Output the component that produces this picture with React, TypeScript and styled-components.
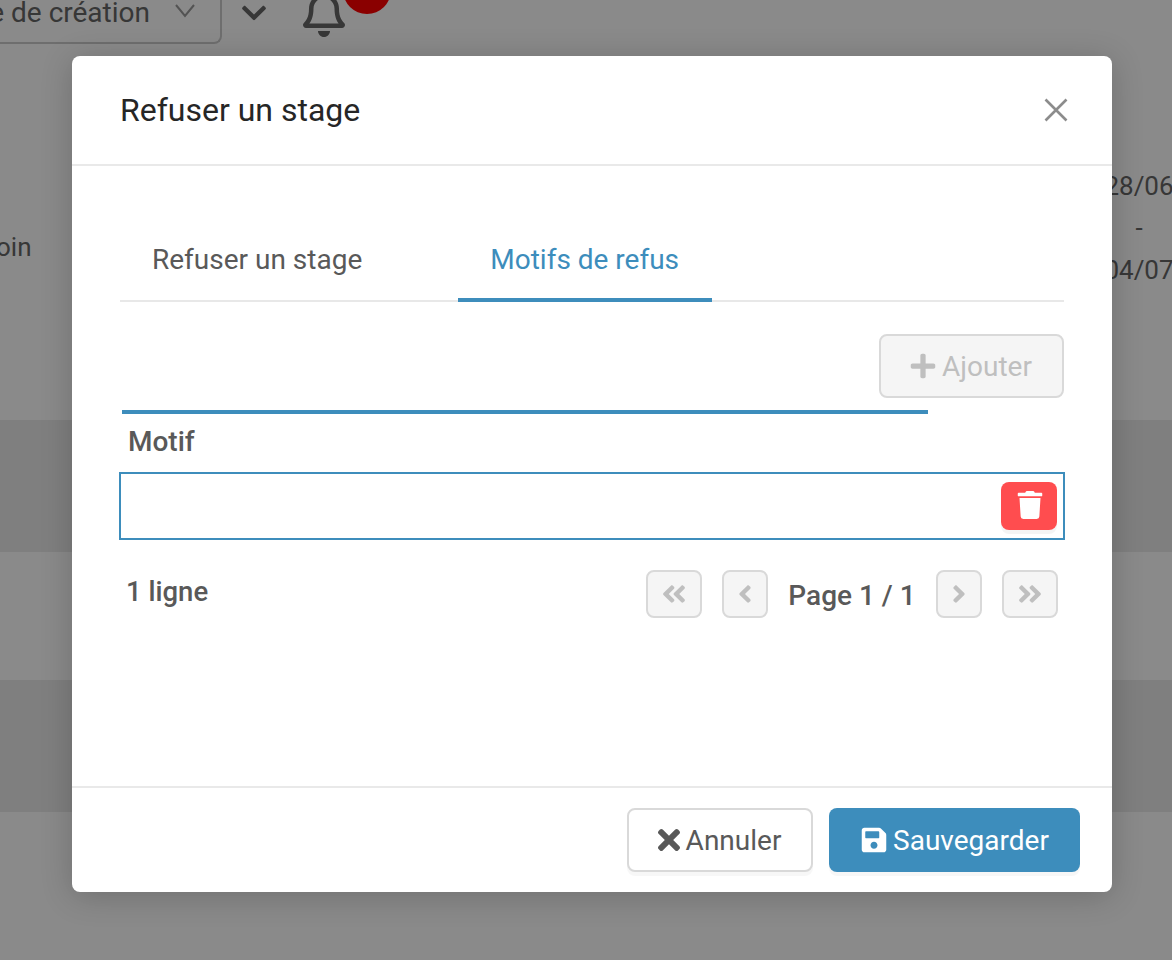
import React from "react";
import styled, { createGlobalStyle } from "styled-components";
import { FaPlus, FaTrash, FaAngleDoubleLeft, FaAngleDoubleRight, FaAngleLeft, FaAngleRight, FaTimes, FaSave, FaChevronDown, FaRegBell } from "react-icons/fa";

const Global = createGlobalStyle`
  html, body { margin: 0; padding: 0; background: #fff; }
  body { font-family: Roboto, "Liberation Sans", sans-serif; color: #555; }
  * { box-sizing: border-box; }
`;

const BLUE = "#3d8dbc";

const Page = styled.div`
  position: relative;
  width: 1172px;
  height: 960px;
  overflow: hidden;
`;
const TopBar = styled.div`
  height: 44px;
  display: flex;
  align-items: flex-start;
`;
const SelectBox = styled.div`
  width: 222px;
  height: 44px;
  padding-right: 34px;
  border: 2px solid #ccc;
  border-top: 0;
  border-left: 0;
  border-radius: 0 0 8px 0;
  display: flex;
  align-items: flex-start;
  justify-content: flex-end;
  font-size: 28px;
  line-height: 25px;
  color: #666;
  white-space: nowrap;
  overflow: hidden;
`;
const SelectChevron = styled.svg`
  width: 20px;
  height: 14px;
  margin: 4px -9px 0 25px;
  flex: none;
`;
const HeaderChevron = styled.div`
  margin: -1px 0 0 18px;
  height: 24px;
  display: flex;
  color: #666;
  font-size: 28px;
`;
const BellWrap = styled.div`
  position: relative;
  margin: -11px 0 0 32px;
  color: #666;
  font-size: 48px;
  line-height: 0;
`;
const Badge = styled.span`
  position: absolute;
  left: 43px;
  top: -23px;
  width: 48px;
  height: 48px;
  border-radius: 50%;
  background: #ff0000;
`;
const FirstRow = styled.div`
  height: 376px;
  position: relative;
  display: flex;
  justify-content: space-between;
  font-size: 26px;
  color: #666;
`;
const NameCell = styled.div`
  margin: 187px 0 0 -4px;
  line-height: 32px;
`;
const DateCell = styled.div`
  width: 68px;
  margin: 121px -1px 0 0;
  text-align: center;
  line-height: 42px;
  white-space: nowrap;
  display: flex;
  flex-direction: column;
  align-items: center;
`;
const Band = styled.div<{ $h: number; $alt?: boolean }>`
  height: ${(p) => p.$h}px;
  background: ${(p) => (p.$alt ? "#ebebeb" : "#fff")};
`;
const Overlay = styled.div`
  position: absolute;
  inset: 0;
  background: rgba(0, 0, 0, 0.46);
  padding: 56px 60px 0 72px;
`;
const Modal = styled.div`
  width: 1040px;
  height: 836px;
  background: #fff;
  border-radius: 8px;
  box-shadow: 0 4px 32px rgba(0, 0, 0, 0.2);
  display: flex;
  flex-direction: column;
`;
const ModalHeader = styled.div`
  height: 110px;
  flex: none;
  border-bottom: 2px solid #e9e9e9;
  padding: 0 44px 0 48px;
  display: flex;
  align-items: center;
  justify-content: space-between;
`;
const Title = styled.h2`
  margin: 0;
  font-size: 32px;
  font-weight: 400;
  color: #262626;
`;
const CloseIcon = styled.svg`
  width: 24px;
  height: 24px;
  stroke: #8c8c8c;
  stroke-width: 2.6;
  fill: none;
`;
const Body = styled.div`
  flex: 1;
  padding: 52px 48px 0;
`;
const Tabs = styled.div`
  height: 84px;
  display: flex;
  gap: 64px;
  border-bottom: 2px solid #e8e8e8;
`;
const Tab = styled.div<{ $active?: boolean }>`
  padding: 2px ${(p) => (p.$active ? 33 : 32)}px 0 32px;
  height: 84px;
  display: flex;
  align-items: center;
  font-size: 28px;
  color: ${(p) => (p.$active ? BLUE : "#595959")};
  border-bottom: 4px solid ${(p) => (p.$active ? BLUE : "transparent")};
`;
const Toolbar = styled.div`
  display: flex;
  justify-content: flex-end;
  margin-top: 32px;
`;
const GhostButton = styled.button`
  border: 2px solid #d9d9d9;
  background: #f5f5f5;
  color: #bfbfbf;
  border-radius: 8px;
  font-family: inherit;
  padding: 0;
  display: inline-flex;
  align-items: center;
  justify-content: center;
`;
const AddButton = styled(GhostButton)`
  width: 185px;
  height: 64px;
  font-size: 28px;
  gap: 5px;
  padding-right: 2px;
  svg { font-size: 28px; }
`;
const HeadBar = styled.div`
  width: 806px;
  height: 4px;
  margin: 12px 0 0 2px;
  background: ${BLUE};
`;
const HeadCell = styled.div`
  height: 54px;
  margin-bottom: 4px;
  padding-left: 8px;
  display: flex;
  align-items: center;
  font-size: 28px;
  font-weight: 500;
  color: #595959;
`;
const DataRow = styled.div`
  width: 946px;
  height: 68px;
  margin-left: -1px;
  border: 2px solid ${BLUE};
  display: flex;
  align-items: center;
  justify-content: flex-end;
  padding-right: 6px;
`;
const DeleteButton = styled.button`
  width: 56px;
  height: 48px;
  border: 0;
  padding: 0 0 2px 2px;
  border-radius: 8px;
  background: #ff4d4f;
  color: #fff;
  font-size: 28px;
  display: flex;
  align-items: center;
  justify-content: center;
  box-shadow: 0 4px 0 rgba(0, 0, 0, 0.045);
`;
const Pager = styled.div`
  display: flex;
  align-items: flex-start;
  justify-content: space-between;
  margin-top: 30px;
  padding: 0 6px 0 6px;
`;
const RowCount = styled.div`
  font-size: 27.5px;
  font-weight: 500;
  line-height: 44px;
  color: #595959;
`;
const PagerControls = styled.div`
  display: flex;
  align-items: center;
`;
const PageButton = styled(GhostButton)<{ $w: number; $ml?: number }>`
  width: ${(p) => p.$w}px;
  height: 48px;
  margin-left: ${(p) => p.$ml ?? 0}px;
  font-size: 28px;
`;
const PageLabel = styled.div`
  width: 168px;
  text-align: center;
  font-size: 28px;
  font-weight: 500;
  padding-top: 2px;
  color: #595959;
`;
const Footer = styled.div`
  height: 106px;
  flex: none;
  border-top: 2px solid #e9e9e9;
  padding: 20px 32px 0 0;
  display: flex;
  justify-content: flex-end;
  gap: 16px;
`;
const CancelButton = styled.button`
  width: 186px;
  height: 64px;
  border-radius: 8px;
  font-family: inherit;
  font-size: 28px;
  padding: 0 6px 0 0;
  display: inline-flex;
  align-items: center;
  justify-content: center;
  gap: 1px;
  color: #595959;
  background: #fff;
  border: 2px solid #d9d9d9;
  box-shadow: 0 4px 0 rgba(0, 0, 0, 0.03);
  svg { font-size: 32px; }
`;
const SaveButton = styled.button`
  width: 251px;
  height: 64px;
  border-radius: 8px;
  font-family: inherit;
  font-size: 28px;
  padding: 0;
  display: inline-flex;
  align-items: center;
  justify-content: center;
  gap: 5px;
  color: #fff;
  background: ${BLUE};
  border: 0;
  box-shadow: 0 4px 0 rgba(0, 0, 0, 0.03);
  svg { font-size: 28px; }
`;

export default function App() {
  return (
    <Page>
      <Global />
      <TopBar>
        <SelectBox>
          <span>e de création</span>
          <SelectChevron viewBox="0 0 20 14" fill="none" stroke="#999" strokeWidth="2">
            <path d="M1 1 L10 12 L19 1" />
          </SelectChevron>
        </SelectBox>
        <HeaderChevron><FaChevronDown /></HeaderChevron>
        <BellWrap>
          <FaRegBell />
          <Badge />
        </BellWrap>
      </TopBar>
      <FirstRow>
        <NameCell>oin</NameCell>
        <DateCell>
          <span>28/06</span>
          <span>-</span>
          <span>04/07</span>
        </DateCell>
      </FirstRow>
      <Band $h={132} $alt />
      <Band $h={128} />
      <Band $h={132} $alt />
      <Band $h={148} />
      <Overlay>
        <Modal>
          <ModalHeader>
            <Title>Refuser un stage</Title>
            <CloseIcon viewBox="0 0 24 24"><path d="M1.5 1.5 L22.5 22.5 M22.5 1.5 L1.5 22.5" /></CloseIcon>
          </ModalHeader>
          <Body>
            <Tabs>
              <Tab>Refuser un stage</Tab>
              <Tab $active>Motifs de refus</Tab>
            </Tabs>
            <Toolbar>
              <AddButton><FaPlus />Ajouter</AddButton>
            </Toolbar>
            <HeadBar />
            <HeadCell>Motif</HeadCell>
            <DataRow>
              <DeleteButton><FaTrash /></DeleteButton>
            </DataRow>
            <Pager>
              <RowCount>1 ligne</RowCount>
              <PagerControls>
                <PageButton $w={56}><FaAngleDoubleLeft /></PageButton>
                <PageButton $w={46} $ml={20}><FaAngleLeft /></PageButton>
                <PageLabel>Page 1 / 1</PageLabel>
                <PageButton $w={46}><FaAngleRight /></PageButton>
                <PageButton $w={56} $ml={20}><FaAngleDoubleRight /></PageButton>
              </PagerControls>
            </Pager>
          </Body>
          <Footer>
            <CancelButton><FaTimes />Annuler</CancelButton>
            <SaveButton><FaSave />Sauvegarder</SaveButton>
          </Footer>
        </Modal>
      </Overlay>
    </Page>
  );
}
